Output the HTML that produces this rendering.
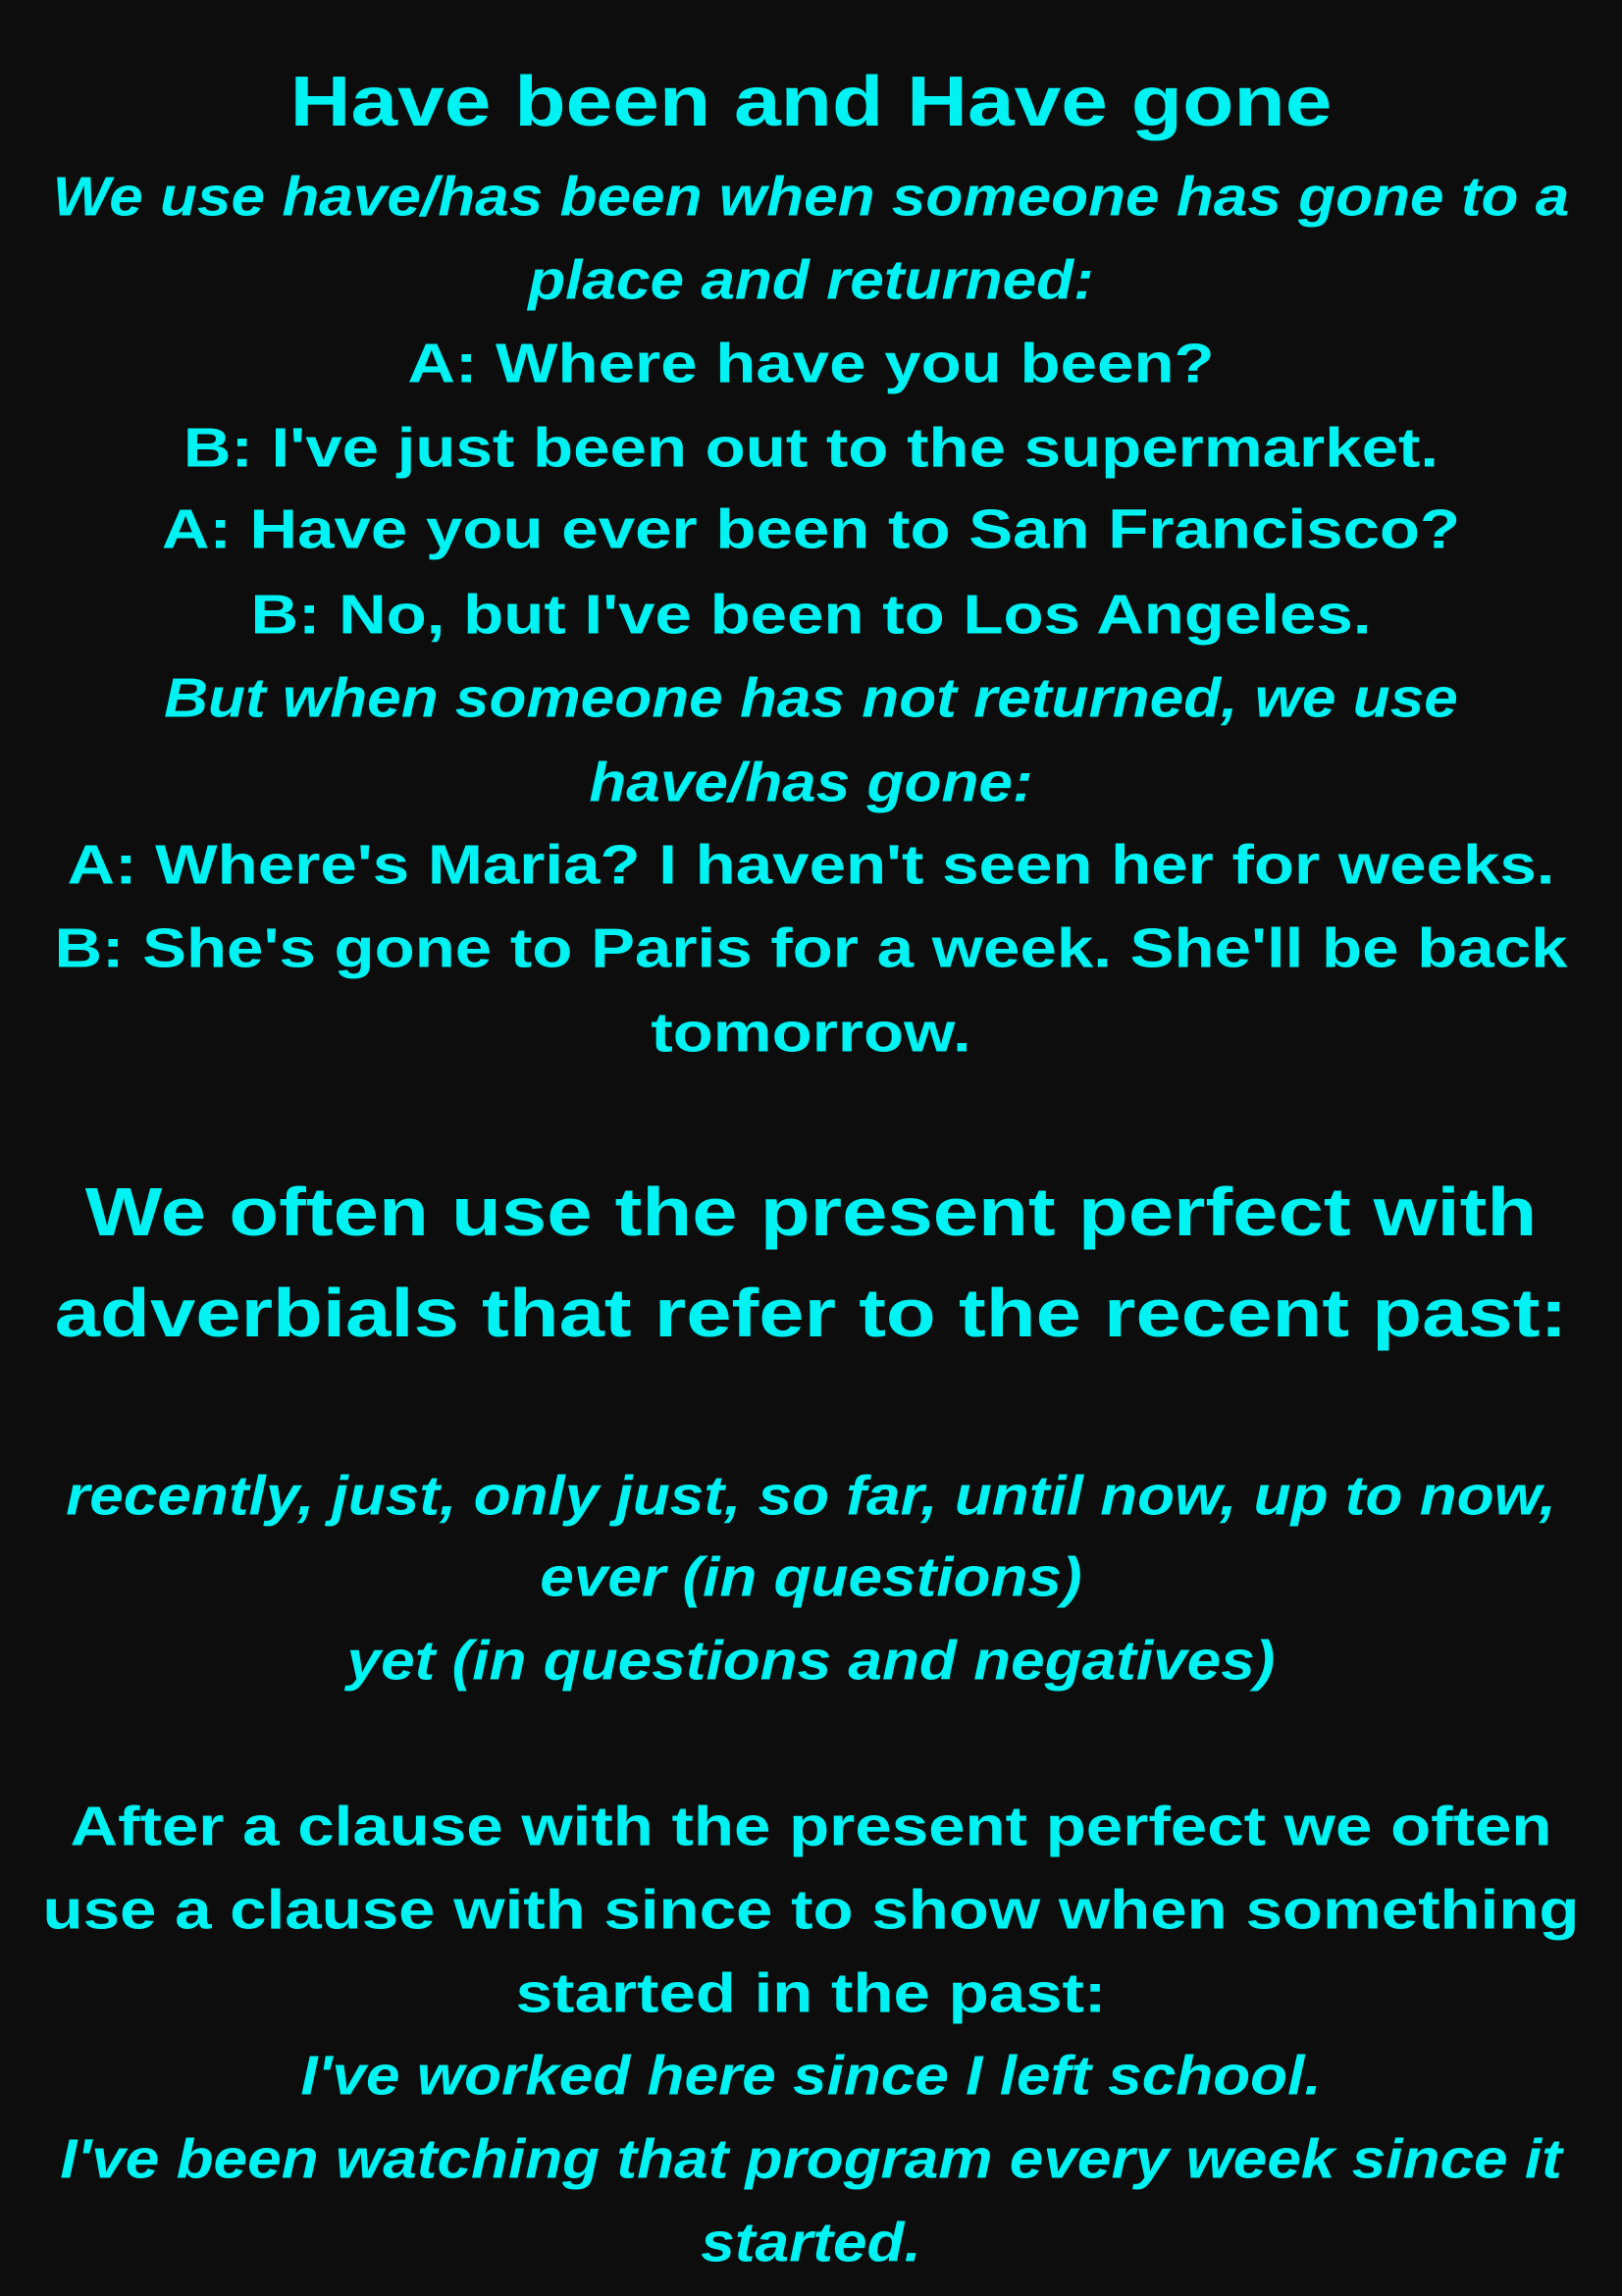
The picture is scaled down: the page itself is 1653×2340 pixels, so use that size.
<!DOCTYPE html>
<html><head><meta charset="utf-8"><style>
html,body{margin:0;padding:0;background:#0d0d0d;}
body{width:1653px;height:2340px;position:relative;overflow:hidden;font-family:"Liberation Sans",sans-serif;font-weight:bold;color:#00f2f2;}
.l{position:absolute;left:0;width:1653px;text-align:center;white-space:nowrap;font-size:57px;line-height:1;transform:translateY(-50%) scaleX(1.18);}
.i{font-style:italic;transform:translateY(-50%) scaleX(1.09);}
.h{font-size:70px;transform:translateY(-50%) scaleX(1.19);}
.t{font-size:72px;transform:translateY(-50%) scaleX(1.19);}
</style></head><body>
<div class="l t" style="top:104px">Have been and Have gone</div>
<div class="l i" style="top:201px">We use have/has been when someone has gone to a</div>
<div class="l i" style="top:286px">place and returned:</div>
<div class="l" style="top:371px">A: Where have you been?</div>
<div class="l" style="top:457px">B: I've just been out to the supermarket.</div>
<div class="l" style="top:540px">A: Have you ever been to San Francisco?</div>
<div class="l" style="top:627px">B: No, but I've been to Los Angeles.</div>
<div class="l i" style="top:712px">But when someone has not returned, we use</div>
<div class="l i" style="top:798px">have/has gone:</div>
<div class="l" style="top:882px">A: Where's Maria? I haven't seen her for weeks.</div>
<div class="l" style="top:967px">B: She's gone to Paris for a week. She'll be back</div>
<div class="l" style="top:1053px">tomorrow.</div>
<div class="l h" style="top:1235px">We often use the present perfect with</div>
<div class="l h" style="top:1338px">adverbials that refer to the recent past:</div>
<div class="l i" style="top:1525px">recently, just, only just, so far, until now, up to now,</div>
<div class="l i" style="top:1608px">ever (in questions)</div>
<div class="l i" style="top:1693px">yet (in questions and negatives)</div>
<div class="l" style="top:1862px">After a clause with the present perfect we often</div>
<div class="l" style="top:1947px">use a clause with since to show when something</div>
<div class="l" style="top:2032px">started in the past:</div>
<div class="l i" style="top:2116px">I've worked here since I left school.</div>
<div class="l i" style="top:2201px">I've been watching that program every week since it</div>
<div class="l i" style="top:2286px">started.</div>
</body></html>
